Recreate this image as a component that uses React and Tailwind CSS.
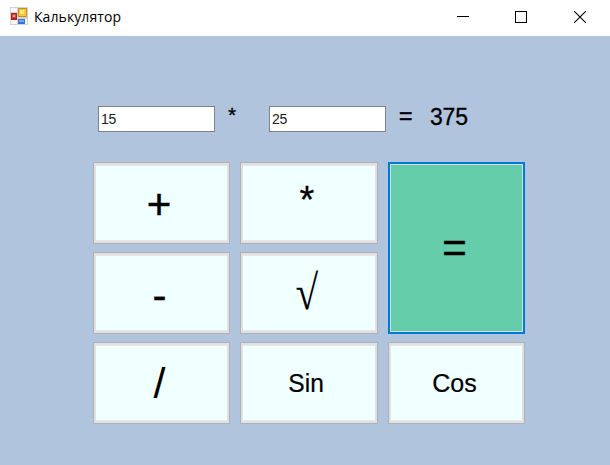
import React from "react";

const frame =
  "flex items-center justify-center border border-[#adb0b4] bg-[#f0ffff] shadow-[inset_0_0_0_2px_#e1e1e1,inset_0_1px_0_2px_#e4e8e8,inset_0_-1px_0_2px_#e4e8e8]";

function Key({ children, className = "" }) {
  return (
    <button type="button" className={`${frame} ${className}`}>
      {children}
    </button>
  );
}

function FormIcon() {
  return (
    <svg width="18" height="18" viewBox="0 0 18 18" shapeRendering="crispEdges">
      <rect width="18" height="18" fill="#d2d2d2" />
      <path d="M1 1h6v4H1zM1 13h6v4H1zM15 12h2v5h-2z" fill="#f7f7f7" />
      <rect x="1" y="6" width="6" height="7" fill="#a92420" />
      <rect x="2" y="7" width="4" height="4" fill="#d0493e" />
      <rect x="3" y="8" width="2" height="2" fill="#ef9a8c" />
      <rect x="8" y="1" width="9" height="9" fill="#c4931c" />
      <rect x="9" y="2" width="7" height="7" fill="#f7c936" />
      <rect x="10" y="3" width="4" height="4" fill="#ffe38a" />
      <rect x="8" y="12" width="7" height="5" fill="#3c70d0" />
      <rect x="9" y="13" width="5" height="2" fill="#76a8f3" />
    </svg>
  );
}

export default function App() {
  return (
    <div className="flex h-[465px] w-[610px] flex-col overflow-hidden bg-[#b0c4de] font-['Liberation_Sans',Arial,sans-serif] text-black">
      <header className="flex h-9 shrink-0 items-center bg-white pl-[10px]">
        <div className="-mt-1">
          <FormIcon />
        </div>
        <span className="-mt-[3px] ml-[6px] font-['Open_Sans','Noto_Sans',sans-serif] text-[14px] leading-5 tracking-[0.08px]">
          Калькулятор
        </span>
        <div className="-mt-[2px] ml-auto flex items-center pr-6">
          <svg className="mr-[46px]" width="12" height="12" shapeRendering="crispEdges">
            <path d="M0 5h12v1H0z" />
          </svg>
          <svg className="mr-[47px]" width="12" height="12" fill="none" stroke="#000" shapeRendering="crispEdges">
            <path d="M.5.5h11v11H.5z" />
          </svg>
          <svg width="12" height="12" fill="none" stroke="#000" strokeWidth="1.1">
            <path d="M.3.3l11.4 11.4M11.7.3L.3 11.7" />
          </svg>
        </div>
      </header>

      <main className="flex-1">
        <div className="flex h-[126px] pl-[98px] pt-[69px]">
          <div className="mt-px flex h-[26px] w-[117px] items-center border border-[#7f8285] bg-white pl-[2px] text-[14px] tracking-[-0.3px] text-[#222]">
            15
          </div>
          <span className="-mt-[2px] ml-[13px] w-[41px] text-[21px] leading-6 [-webkit-text-stroke:0.3px_black]">*</span>
          <div className="mt-px flex h-[26px] w-[117px] items-center border border-[#7f8285] bg-white pl-[2px] text-[14px] tracking-[-0.3px] text-[#222]">
            25
          </div>
          <span className="-mt-px ml-[13px] w-[31px] text-[23px] leading-6 [-webkit-text-stroke:0.6px_black]">=</span>
          <span className="text-[23px] leading-6 tracking-[-0.2px] [-webkit-text-stroke:0.3px_black]">375</span>
        </div>

        <div className="ml-[93px] grid w-[432px] grid-cols-[137px_138px_137px] grid-rows-[82px_82px_82px] gap-x-[10px] gap-y-2">
          <Key className="pr-[5px] pt-[2px] text-[42px] [-webkit-text-stroke:0.5px_black]">+</Key>
          <Key className="pb-[5px] pr-1 text-[38px] [-webkit-text-stroke:0.3px_black]">*</Key>
          <button
            type="button"
            className="row-span-2 flex items-center justify-center border-2 border-[#0078d7] bg-[#66cdaa] pb-[2px] pr-1 text-[42px] shadow-[inset_0_0_0_1px_#d5dfdc] [-webkit-text-stroke:0.5px_black]"
          >
            =
          </button>
          <Key className="pr-1 pt-1 text-[42px] [-webkit-text-stroke:0.4px_black]">-</Key>
          <Key className="pr-1 font-['Liberation_Serif',serif] text-[43px]">
            <span className="inline-block scale-x-[0.96] scale-y-[1.14]">√</span>
          </Key>
          <Key className="pr-1 text-[43px]">/</Key>
          <Key className="pr-[5px] pt-[2px] text-[25px] [-webkit-text-stroke:0.2px_black]">
            <span className="inline-block scale-x-[0.98]">Sin</span>
          </Key>
          <Key className="pr-1 pt-[2px] text-[25px] [-webkit-text-stroke:0.2px_black]">
            <span className="inline-block">Cos</span>
          </Key>
        </div>
      </main>
    </div>
  );
}
